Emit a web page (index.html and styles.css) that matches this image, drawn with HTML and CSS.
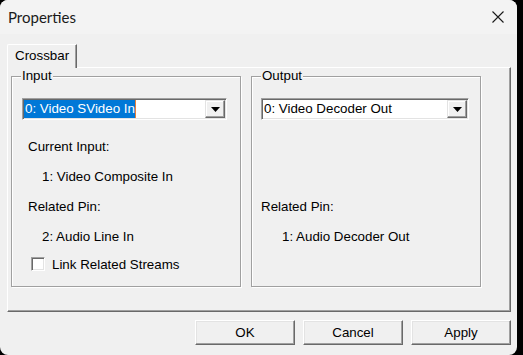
FILE: index.html
```html
<!DOCTYPE html>
<html>
<head>
<meta charset="utf-8">
<link rel="stylesheet" href="styles.css">
</head>
<body>
<div class="window">
  <div class="titlebar">
    <span class="title">Properties</span>
    <svg class="close" width="12" height="12" viewBox="0 0 12 12"><path d="M0.5 0.5 L11.5 11.5 M11.5 0.5 L0.5 11.5" stroke="#1a1a1a" stroke-width="1.1" fill="none"/></svg>
  </div>
  <div class="client">
    <div class="tabs">
      <div class="tabstrip"><div class="tab">Crossbar</div></div>
      <div class="panel">
        <fieldset class="group group-in">
          <legend>Input</legend>
          <div class="combo combo-in">
            <span class="combo-text"><span class="sel">0: Video SVideo In</span></span>
            <span class="combo-btn"><svg width="9" height="5" viewBox="0 0 9 5"><path d="M0 0 H9 L4.5 5 Z" fill="#000"/></svg></span>
          </div>
          <div class="rows">
            <div class="row lbl-in">Current Input:</div>
            <div class="row val-in">1: Video Composite In</div>
            <div class="row lbl-in">Related Pin:</div>
            <div class="row val-in">2: Audio Line In</div>
            <label class="check"><span class="box"></span>Link Related Streams</label>
          </div>
        </fieldset>
        <fieldset class="group group-out">
          <legend>Output</legend>
          <div class="combo combo-out">
            <span class="combo-text"><span class="plain">0: Video Decoder Out</span></span>
            <span class="combo-btn"><svg width="9" height="5" viewBox="0 0 9 5"><path d="M0 0 H9 L4.5 5 Z" fill="#000"/></svg></span>
          </div>
          <div class="rows">
            <div class="row spacer"></div>
            <div class="row spacer"></div>
            <div class="row lbl-out">Related Pin:</div>
            <div class="row val-out">1: Audio Decoder Out</div>
          </div>
        </fieldset>
      </div>
    </div>
    <div class="buttons">
      <button class="btn">OK</button>
      <button class="btn">Cancel</button>
      <button class="btn">Apply</button>
    </div>
  </div>
</div>
</body>
</html>
```
FILE: styles.css
```css
html, body {
  margin: 0;
  padding: 0;
  background: #000;
  overflow: hidden;
}
.window {
  width: 517px;
  height: 355px;
  background: #f0f0f0;
  border-radius: 8px;
  overflow: hidden;
  font-family: "Liberation Sans", Arial, sans-serif;
  font-size: 13.33px;
  color: #000;
}
.titlebar {
  height: 34px;
  background: #f3f3f3;
  display: flex;
  align-items: center;
  padding-left: 8px;
}
.title {
  font-family: Lato, "Noto Sans", sans-serif;
  font-size: 15px;
  color: #1a1a1a;
  line-height: 18px;
}
.close {
  margin-left: auto;
  margin-right: 13px;
}
.client {
  padding: 10px 6px 0 7px;
}
.tabstrip {
  display: flex;
  height: 23px;
}
.tab {
  position: relative;
  z-index: 1;
  height: 24px;
  box-sizing: border-box;
  padding: 0 7px;
  line-height: 22px;
  background: #f0f0f0;
  border-top: 1px solid #fff;
  border-left: 1px solid #fff;
  border-right: 1px solid #696969;
  box-shadow: inset -1px 0 0 #a0a0a0;
  border-top-left-radius: 2px;
}
.panel {
  width: 504px;
  height: 245px;
  box-sizing: border-box;
  border-top: 1px solid #fff;
  border-left: 1px solid #fff;
  border-right: 1px solid #696969;
  border-bottom: 1px solid #696969;
  box-shadow: inset -1px -1px 0 #a0a0a0;
  padding: 0 0 0 3px;
  display: flex;
  gap: 10px;
  align-items: flex-start;
}
.group {
  margin: 0;
  box-sizing: border-box;
  width: 230px;
  height: 219px;
  border: 1px solid #a0a0a0;
  box-shadow: inset 1px 1px 0 #fff, 1px 1px 0 #fff;
  padding: 14px 0 0 10px;
  min-width: 0;
}
.group-out {
  padding-left: 9px;
}
.group legend {
  padding: 0 1px;
  margin-left: -1px;
  line-height: 16px;
  background: #f0f0f0;
}
.group-out legend {
  margin-left: 0;
}
.combo {
  display: flex;
  height: 22px;
  box-sizing: border-box;
  border-top: 1px solid #a0a0a0;
  border-left: 1px solid #a0a0a0;
  border-right: 1px solid #fff;
  border-bottom: 1px solid #fff;
  box-shadow: inset 1px 1px 0 #696969, inset -1px -1px 0 #e3e3e3;
  background: #fff;
  padding: 1px;
}
.combo-in { width: 205px; }
.combo-out { width: 208px; }
.combo-text {
  flex: 1;
  display: flex;
  align-items: stretch;
  line-height: 18px;
}
.sel {
  background: #0078d7;
  color: #fff;
  padding: 0 0 0 1px;
  border-right: 1px solid #e8803a;
}
.plain {
  padding-left: 1px;
}
.combo-btn {
  width: 20px;
  box-sizing: border-box;
  background: #f0f0f0;
  border-top: 1px solid #e3e3e3;
  border-left: 1px solid #e3e3e3;
  border-right: 1px solid #696969;
  border-bottom: 1px solid #696969;
  box-shadow: inset -1px -1px 0 #a0a0a0, inset 1px 1px 0 #fff;
  display: flex;
  align-items: center;
  justify-content: center;
}
.combo-btn svg {
  display: block;
  margin-top: 1px;
}
.rows {
  margin-top: 12px;
  display: flex;
  flex-direction: column;
}
.row {
  height: 30px;
  line-height: 30px;
  white-space: nowrap;
}
.lbl-in { padding-left: 6px; }
.val-in { padding-left: 20px; }
.lbl-out { padding-left: 0; }
.val-out { padding-left: 21px; }
.check {
  height: 24px;
  display: flex;
  align-items: center;
  padding-left: 9px;
  gap: 7px;
}
.box {
  width: 14px;
  height: 14px;
  box-sizing: border-box;
  background: #fff;
  border-top: 1px solid #a0a0a0;
  border-left: 1px solid #a0a0a0;
  border-right: 1px solid #fff;
  border-bottom: 1px solid #fff;
  box-shadow: inset 1px 1px 0 #696969, inset -1px -1px 0 #e3e3e3;
}
.buttons {
  display: flex;
  justify-content: flex-end;
  gap: 8px;
  margin-top: 8px;
  padding-right: 0;
}
.btn {
  width: 100px;
  height: 25px;
  box-sizing: border-box;
  font-family: "Liberation Sans", Arial, sans-serif;
  font-size: 13.33px;
  color: #000;
  background: #f0f0f0;
  border-top: 1px solid #fff;
  border-left: 1px solid #fff;
  border-right: 1px solid #696969;
  border-bottom: 1px solid #696969;
  box-shadow: inset -1px -1px 0 #a0a0a0, inset 1px 1px 0 #e3e3e3;
  padding: 0;
  border-radius: 0;
}
```
